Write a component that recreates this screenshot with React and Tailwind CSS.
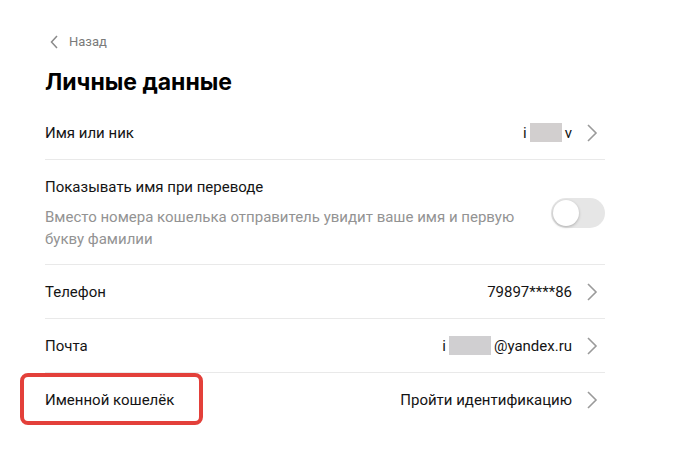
import React from "react";

function Chevron() {
  return (
    <svg width="12" height="18" viewBox="0 0 12 18" className="shrink-0 ml-[14px] mr-[7px]">
      <path d="M2 1 L10 9 L2 17" fill="none" stroke="#9a9a9a" strokeWidth="1.6" />
    </svg>
  );
}

function Row({ label, children, last, highlight }) {
  return (
    <div className={"relative flex items-center h-[54px] " + (last ? "" : "border-b border-[#e9e9e9]")}>
      {highlight && (
        <div className="absolute left-[-25px] top-0 w-[183px] h-[52px] border-[4px] border-[#e3403a] rounded-[8px]" />
      )}
      <div className="flex-1 text-[15px] leading-[22px] text-[#141414]">{label}</div>
      <div className="text-[15px] leading-[22px] text-[#141414] flex items-center">{children}</div>
      <Chevron />
    </div>
  );
}

export default function App() {
  return (
    <div className="min-h-[469px] bg-white pl-[45px] pt-[31px]" style={{ fontFamily: "Roboto, 'Liberation Sans', sans-serif" }}>
      <div className="w-[560px]">
        <div className="flex items-center h-[22px]">
          <svg width="10" height="14" viewBox="0 0 10 14" className="ml-[4px]">
            <path d="M8 1 L2.5 7 L8 13" fill="none" stroke="#8a8a8a" strokeWidth="1.5" />
          </svg>
          <span className="ml-[10px] text-[13px] text-[#7a7a7a]">Назад</span>
        </div>
        <h1 className="mt-[13px] mb-[8px] text-[23px] leading-[32px] font-bold text-black" style={{ fontFamily: "Inter, Roboto, sans-serif" }}>
          Личные данные
        </h1>
        <Row label="Имя или ник">
          <span>i</span>
          <span className="inline-block w-[32px] h-[19px] bg-[#d2cfcf] mx-[3px]" />
          <span>v</span>
        </Row>
        <div className="flex items-center border-b border-[#e9e9e9] pt-[16px] pb-[14px]">
          <div className="flex-1 pr-[16px]">
            <div className="text-[15px] leading-[22px] text-[#141414]">Показывать имя при переводе</div>
            <div className="mt-[8px] text-[15px] leading-[22px] text-[#939393]">
              Вместо номера кошелька отправитель увидит ваше имя и первую букву фамилии
            </div>
          </div>
          <div className="w-[54px] h-[30px] rounded-full bg-[#e6e6e6] flex items-center px-[2px] shrink-0">
            <div className="w-[26px] h-[26px] rounded-full bg-white shadow-[0_1px_3px_rgba(0,0,0,0.25)]" />
          </div>
        </div>
        <Row label="Телефон">79897****86</Row>
        <Row label="Почта">
          <span>i</span>
          <span className="inline-block w-[42px] h-[19px] bg-[#d0cfd1] mx-[3px]" />
          <span>@yandex.ru</span>
        </Row>
        <Row label="Именной кошелёк" last highlight>
          Пройти идентификацию
        </Row>
      </div>
    </div>
  );
}
